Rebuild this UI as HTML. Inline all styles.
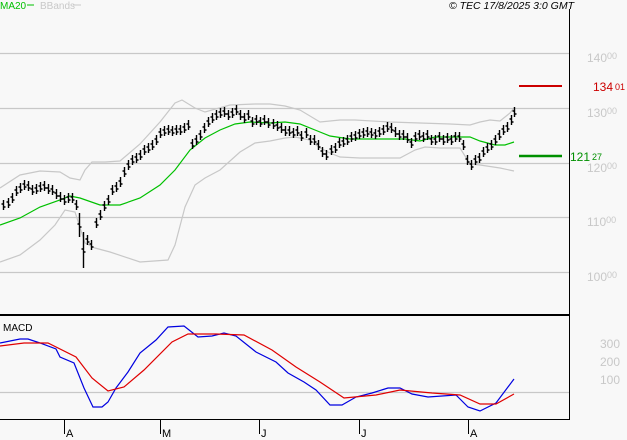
<!DOCTYPE html>
<html><head><meta charset="utf-8"><style>
html,body{margin:0;padding:0;background:#f8f8f8;}
body{width:627px;height:440px;overflow:hidden;position:relative;font-family:"Liberation Sans",sans-serif;}
svg{position:absolute;left:0;top:0;}
</style></head><body>
<svg width="627" height="440" viewBox="0 0 627 440" xmlns="http://www.w3.org/2000/svg">
<rect width="627" height="440" fill="#f8f8f8"/>
<g stroke="#c8c8c8" stroke-width="1.2">
<line x1="0" y1="53.5" x2="569" y2="53.5"/>
<line x1="0" y1="108.5" x2="569" y2="108.5"/>
<line x1="0" y1="163.5" x2="569" y2="163.5"/>
<line x1="0" y1="217.5" x2="569" y2="217.5"/>
<line x1="0" y1="272.5" x2="569" y2="272.5"/>
<line x1="0" y1="392.5" x2="569" y2="392.5"/>
</g>
<line x1="569.5" y1="9" x2="569.5" y2="420" stroke="#000" stroke-width="1"/>
<line x1="0" y1="315" x2="569" y2="315" stroke="#000" stroke-width="2"/>
<line x1="0" y1="419.5" x2="569" y2="419.5" stroke="#000" stroke-width="1"/>
<g stroke="#000" stroke-width="1">
<line x1="64.5" y1="420" x2="64.5" y2="434"/>
<line x1="160.5" y1="420" x2="160.5" y2="434"/>
<line x1="259.5" y1="420" x2="259.5" y2="434"/>
<line x1="359.5" y1="420" x2="359.5" y2="434"/>
<line x1="468.5" y1="420" x2="468.5" y2="434"/>
</g>
<g font-size="11" fill="#000">
<text x="66" y="437">A</text><text x="162" y="437">M</text><text x="261" y="437">J</text><text x="361" y="437">J</text><text x="470" y="437">A</text>
</g>
<g fill="none" stroke="#c8c8c8" stroke-width="1.2">
<polyline points="0,188 20,175 40,171 60,172 70,178 80,180 85,170 92,162 105,162 120,161 140,144 160,122 175,103 182,100 195,108 205,112 230,105 255,104 270,104 285,106 300,110 320,122 340,120 355,120 390,122 420,123 450,124 470,125 480,122 490,120 500,121 510,113 514,108"/>
<polyline points="0,262 20,255 40,240 55,225 65,210 75,212 85,243 95,248 110,252 140,262 168,260 175,245 185,207 195,185 205,178 220,170 240,152 255,143 270,141 285,138 295,137 310,140 320,148 330,153 340,157 360,158 400,158 415,150 425,147 440,148 460,148 470,164 480,165 500,168 514,171"/>
</g>
<polyline fill="none" stroke="#00c000" stroke-width="1.2" points="0,225 20,218 40,207 60,200 70,196 80,198 100,205 120,205 140,198 160,185 175,170 190,150 205,138 220,130 235,124 250,122 270,123 285,122 300,124 315,130 330,136 350,139 370,139 385,139 405,139 420,141 435,137 455,137 470,137 480,141 495,145 505,145 514,142"/>
<path id="bars" fill="none" stroke="#000" stroke-width="1.4"/>
<polyline fill="none" stroke="#0000e0" stroke-width="1.2" points="0,343 20,339 28,339 40,343 56,349 60,357 74,363 84,388 93,407 102,407 108,402 116,388 128,372 140,353 156,340 168,327 184,326 198,337 212,336 224,333 236,336 256,352 276,362 288,373 304,382 316,390 330,405 342,405 356,397 372,393 388,388 400,388 412,394 428,397 456,395 468,407 480,411 496,403 514,379"/>
<polyline fill="none" stroke="#e00000" stroke-width="1.2" points="0,346 24,343 48,343 76,357 92,378 108,391 124,387 144,370 172,342 188,334 216,334 244,335 272,350 296,367 320,382 344,398 376,395 400,390 432,393 460,395 480,404 496,404 514,394"/>
<g font-size="11">
<text x="0" y="9" fill="#00c000" font-size="10">MA20</text>
<line x1="27" y1="5" x2="34" y2="5" stroke="#00c000"/>
<text x="40" y="9" fill="#c8c8c8" font-size="10">BBands</text>
<line x1="73" y1="5" x2="81" y2="5" stroke="#c8c8c8"/>
<text x="574" y="9" text-anchor="end" font-style="italic" font-size="10.5">© TEC 17/8/2025 3:0 GMT</text>
<text x="3" y="331" font-size="10">MACD</text>
</g>
<g fill="#c8c8c8" font-size="12">
<text x="587" y="62">140<tspan font-size="9" dy="-3">00</tspan></text>
<text x="587" y="117">130<tspan font-size="9" dy="-3">00</tspan></text>
<text x="587" y="172">120<tspan font-size="9" dy="-3">00</tspan></text>
<text x="587" y="226">110<tspan font-size="9" dy="-3">00</tspan></text>
<text x="587" y="281">100<tspan font-size="9" dy="-3">00</tspan></text>
<text x="600" y="348">300</text>
<text x="600" y="366">200</text>
<text x="600" y="384">100</text>
</g>
<line x1="519" y1="86" x2="562" y2="86" stroke="#cc0000" stroke-width="2"/>
<text x="593" y="91" fill="#cc0000" font-size="12">134<tspan font-size="9" dx="2" dy="-1">01</tspan></text>
<line x1="519" y1="156" x2="562" y2="156" stroke="#009000" stroke-width="2.5"/>
<text x="570" y="161" fill="#009000" font-size="12">121<tspan font-size="9" dx="2" dy="-1">27</tspan></text>
</svg>
<script>
var c=[[3,205],[8,203],[12,198],[16,191],[20,188],[24,185],[28,186],[32,190],[36,189],[40,187],[44,186],[48,189],[52,190],[56,194],[60,197],[64,200],[68,198],[72,198],[76,205],[79,225],[83,250],[87,240],[91,245],[96,223],[100,215],[104,206],[108,200],[112,190],[116,187],[120,182],[124,172],[128,165],[132,160],[136,158],[140,155],[144,150],[148,148],[152,145],[156,140],[160,133],[164,131],[168,130],[172,131],[176,130],[180,130],[184,128],[188,125],[192,144],[196,140],[200,135],[204,128],[208,122],[212,118],[216,115],[220,113],[224,112],[228,115],[232,113],[236,110],[240,115],[244,118],[248,115],[252,122],[256,120],[260,122],[264,120],[268,123],[273,124],[277,126],[281,128],[285,131],[289,131],[293,133],[297,131],[301,136],[306,133],[310,140],[314,140],[318,145],[322,152],[326,155],[331,150],[335,148],[339,143],[343,142],[347,140],[351,137],[355,136],[359,134],[363,133],[367,132],[371,133],[375,134],[379,132],[383,130],[387,127],[391,128],[395,132],[399,135],[403,135],[407,138],[411,143],[415,137],[419,135],[423,137],[427,135],[431,140],[435,140],[439,137],[443,140],[447,138],[451,140],[455,137],[459,137],[463,145],[467,160],[471,165],[475,160],[479,158],[483,152],[487,148],[491,145],[495,140],[499,135],[503,130],[507,127],[511,120],[514,112]];
var d="";for(var i=0;i<c.length;i++){var x=c[i][0]+.5,y=c[i][1];var h=(i==20?18:(i==19?12:5));if(i==191)h=10;d+="M"+x+" "+(y-h)+"V"+(y+h)+"M"+(x-2)+" "+(y-1)+"h2M"+x+" "+(y+2)+"h2";}
document.getElementById("bars").setAttribute("d",d);
</script>
</body></html>
